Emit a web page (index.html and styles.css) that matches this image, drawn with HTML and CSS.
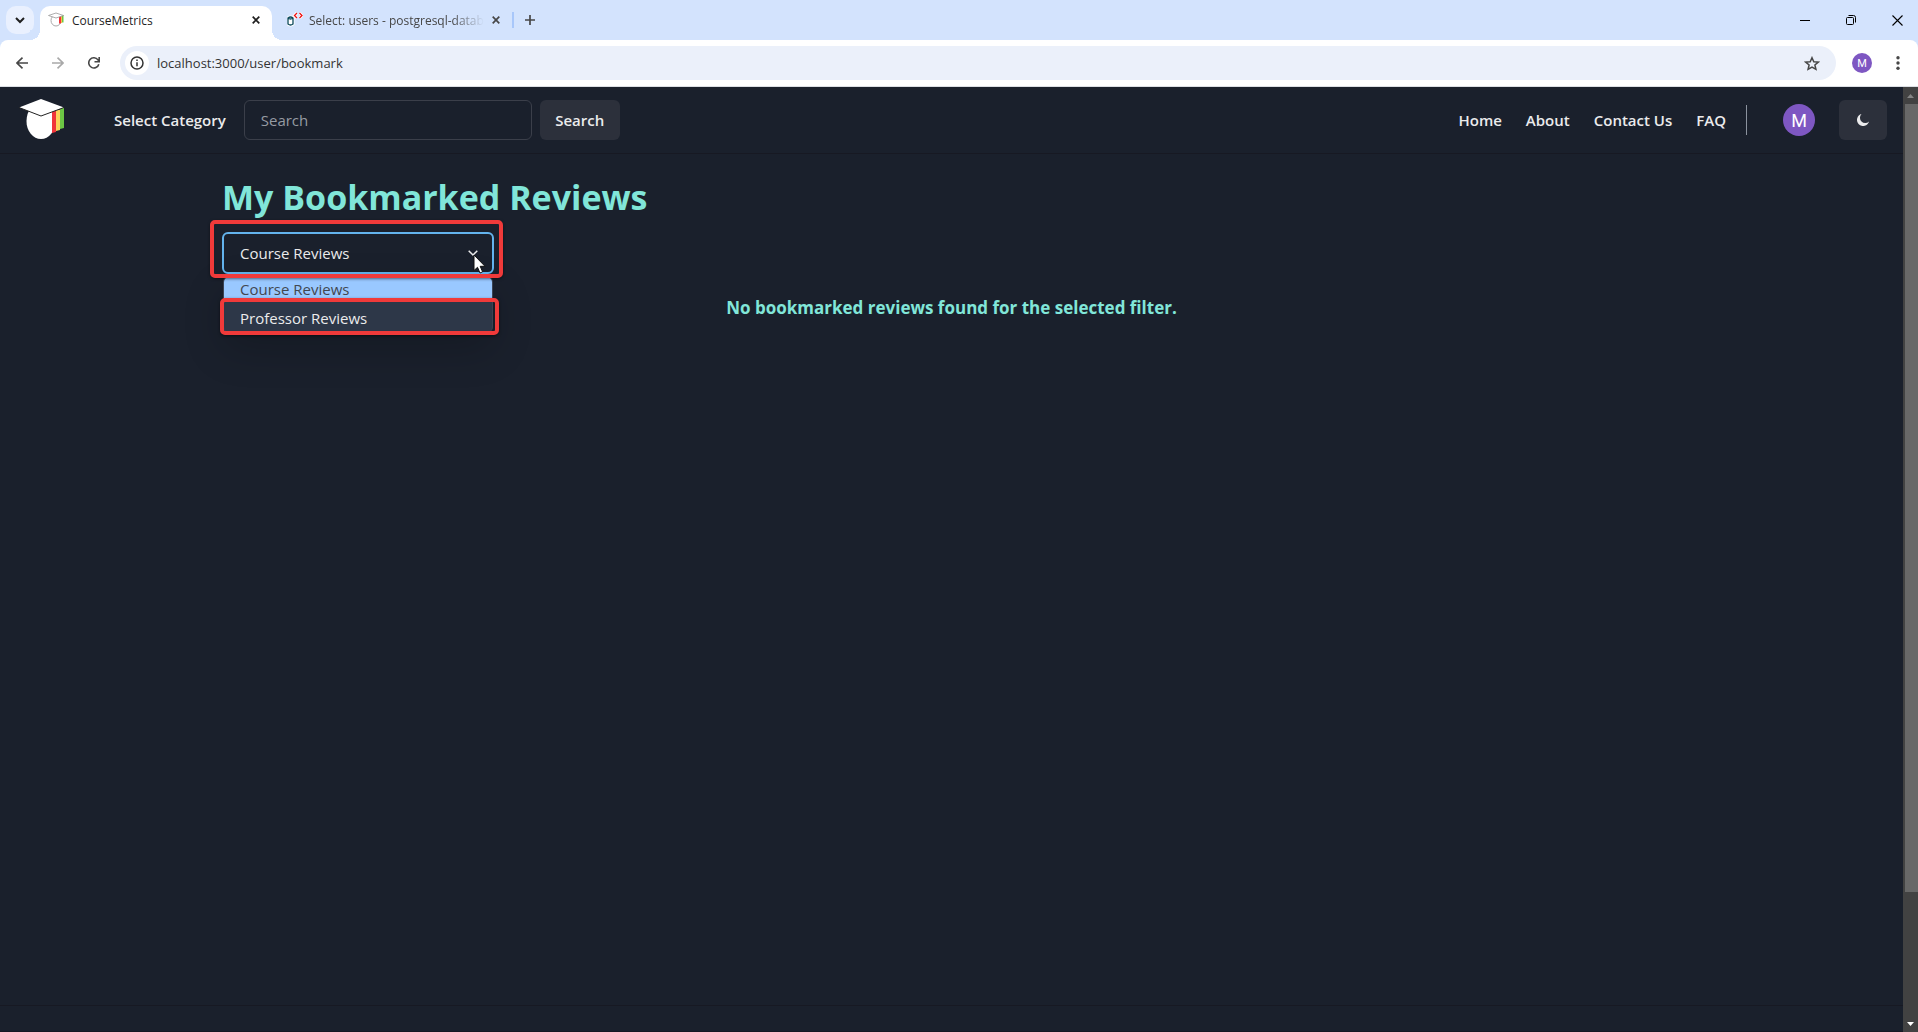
FILE: index.html
```html
<!DOCTYPE html>
<html lang="en">
<head>
<meta charset="utf-8">
<meta name="viewport" content="width=device-width, initial-scale=1">
<title>CourseMetrics</title>
<link rel="stylesheet" href="styles.css">
</head>
<body>
<svg class="defs" aria-hidden="true">
  <symbol id="cap" viewBox="0 0 46 42">
    <ellipse cx="22" cy="23" rx="14.5" ry="18" fill="#fff"/>
    <path d="M33 13h4v21l-4 1z" fill="#f0343a"/>
    <path d="M37 12h4v20l-4 1z" fill="#fbd25a"/>
    <path d="M41 10h4v20l-4 1z" fill="#6cc644"/>
    <path d="M0 9.500 22 1l23 8.500L22 18z" fill="#fff"/>
    <path d="M0 9.500 22 18l23-8.500" fill="none" stroke="#222" stroke-width="1"/>
  </symbol>
</svg>

<div class="browser">
  <div class="tabstrip">
    <button class="tab-search" aria-label="Search tabs"><svg width="10" height="7" viewBox="0 0 10 7"><path d="M1 1l4 4 4-4" fill="none" stroke="#1f1f1f" stroke-width="2"/></svg></button>
    <div class="tab tab-active">
      <svg class="favicon" viewBox="0 0 16 16"><ellipse cx="8" cy="8.500" rx="5" ry="5.500" fill="#fff" stroke="#aaa"/><path d="M11 4h2v7.500h-2z" fill="#f0343a"/><path d="M13 4h1v7h-1z" fill="#fbc04a"/><path d="M14 3h1.500v7.500H14z" fill="#6cc644"/><path d="M.5 3.500 8 1l7.500 2.500L8 6z" fill="#fff" stroke="#999" stroke-width=".8"/></svg>
      <span class="tab-title">CourseMetrics</span>
      <button class="tab-close" aria-label="Close tab"><svg width="8" height="8" viewBox="0 0 8 8"><path d="M.7.7l6.600 6.600M7.300.7L.7 7.300" stroke="#1f1f1f" stroke-width="1.700"/></svg></button>
    </div>
    <div class="tab tab-idle">
      <svg class="favicon" viewBox="0 0 16 16"><path d="M1 6q2.500-2 5 0v6q-2.500 2-5 0z" fill="#fff" stroke="#fff" stroke-width="3"/><path d="M1 6q2.500-2 5 0v6q-2.500 2-5 0zM1 6q2.500 2 5 0" fill="#fff" stroke="#0c4a5c" stroke-width="1.300"/><path d="M10 1L7.500 3.500 10 6M12.500 1L15 3.500 12.500 6" fill="none" stroke="#fff" stroke-width="3"/><path d="M10 1L7.500 3.500 10 6M12.500 1L15 3.500 12.500 6" fill="none" stroke="#e11" stroke-width="1.300"/></svg>
      <span class="tab-title tab-fade">Select: users - postgresql-datab</span>
      <button class="tab-close" aria-label="Close tab"><svg width="8" height="8" viewBox="0 0 8 8"><path d="M.7.7l6.600 6.600M7.300.7L.7 7.300" stroke="#474747" stroke-width="1.700"/></svg></button>
    </div>
    <button class="new-tab" aria-label="New tab"><svg width="10" height="10" viewBox="0 0 10 10"><path d="M5 0v10M0 5h10" stroke="#474747" stroke-width="1.700"/></svg></button>
    <div class="window-controls">
      <button aria-label="Minimize"><svg width="10" height="10" viewBox="0 0 10 10"><path d="M0 5.500h10" stroke="#000"/></svg></button>
      <button aria-label="Restore"><svg width="10" height="10" viewBox="0 0 10 10" fill="none" stroke="#000"><rect x=".5" y="2.500" width="7" height="7" rx="1"/><path d="M2.500.5h5q2 0 2 2v5"/></svg></button>
      <button aria-label="Close window"><svg width="11" height="11" viewBox="0 0 11 11"><path d="M.5.5l10 10M10.500.5l-10 10" stroke="#000" stroke-width="1.100"/></svg></button>
    </div>
  </div>

  <div class="toolbar">
    <div class="nav-buttons">
      <button aria-label="Back"><svg width="12" height="12" viewBox="0 0 12 12"><path d="M12 6H1M6.500.6L1 6l5.500 5.400" fill="none" stroke="#474747" stroke-width="1.600"/></svg></button>
      <button aria-label="Forward"><svg width="12" height="12" viewBox="0 0 12 12"><path d="M0 6h11M5.500.6L11 6l-5.500 5.400" fill="none" stroke="#a9a9a9" stroke-width="1.600"/></svg></button>
      <button aria-label="Reload"><svg width="12" height="12" viewBox="0 0 12 12"><path d="M10.800 7.200A5.100 5.100 0 1 1 10 2.900L11 4.500M11.200 0v4.700H6.500" fill="none" stroke="#474747" stroke-width="1.600"/></svg></button>
    </div>
    <div class="omnibox">
      <button class="site-info" aria-label="Site information"><svg width="14" height="14" viewBox="0 0 14 14"><circle cx="7" cy="7" r="6" fill="none" stroke="#333" stroke-width="1.500"/><path d="M7 6.200v4M7 3.500v1.500" stroke="#333" stroke-width="1.500"/></svg></button>
      <input class="url" type="text" aria-label="Address" value="localhost:3000/user/bookmark">
      <button class="star" aria-label="Bookmark this tab"><svg width="16" height="15" viewBox="0 0 16 15"><path d="M8 1.700l1.800 4 4.500.4-3.400 2.900 1 4.300L8 11l-3.900 2.300 1-4.300L1.700 6.100l4.500-.4z" fill="none" stroke="#474747" stroke-width="1.500"/></svg></button>
    </div>
    <button class="avatar avatar-small" aria-label="Profile">M</button>
    <button class="more" aria-label="Browser menu"><svg width="4" height="14" viewBox="0 0 4 14" fill="#474747"><circle cx="2" cy="1.700" r="1.700"/><circle cx="2" cy="7" r="1.700"/><circle cx="2" cy="12.300" r="1.700"/></svg></button>
  </div>

  <div class="viewport">
    <div class="page">
      <header class="site-header">
        <a class="logo" href="#" aria-label="CourseMetrics home"><svg width="46" height="42"><use href="#cap"/></svg></a>
        <button class="category">Select Category</button>
        <form class="search">
          <input type="search" placeholder="Search" aria-label="Search">
          <button type="button">Search</button>
        </form>
        <nav class="links">
          <a href="#">Home</a><a href="#">About</a><a href="#">Contact Us</a><a href="#">FAQ</a>
        </nav>
        <span class="divider"></span>
        <button class="avatar" aria-label="Account">M</button>
        <button class="theme" aria-label="Toggle colour mode"><svg width="14" height="14" viewBox="0 0 14 14"><path d="M5.500 1A6.100 6.100 0 1 0 13 8.500 4.300 4.300 0 0 1 5.500 1z" fill="#ebebec"/></svg></button>
      </header>

      <main class="content">
        <h1>My Bookmarked Reviews</h1>
        <div class="filter">
          <select aria-label="Review type"><option>Course Reviews</option><option>Professor Reviews</option></select>
          <svg class="chevron" width="10" height="6" viewBox="0 0 10 6"><path d="M.7.7L5 5 9.300.7" fill="none" stroke="#ebebec" stroke-width="1.500"/></svg>
          <ul class="options" role="listbox">
            <li class="option-selected" role="option" aria-selected="true">Course Reviews</li>
            <li role="option">Professor Reviews</li>
          </ul>
          <span class="mark mark-select"></span>
          <span class="mark mark-option"></span>
          <svg class="cursor" width="13" height="20" viewBox="0 0 13 20"><path d="M1 1v15.500l3.500-3.200 2.500 5.700 2.600-1.200L7.200 12.300H12z" fill="#fff" stroke="#111"/></svg>
        </div>
        <p class="empty">No bookmarked reviews found for the selected filter.</p>
      </main>

      <footer class="site-footer"></footer>
    </div>
    <div class="scrollbar" aria-hidden="true">
      <svg class="arrow" width="7" height="4" viewBox="0 0 7 4"><path d="M0 4l3.500-4L7 4z" fill="#858585"/></svg>
      <span class="thumb"></span>
      <span class="track"></span>
      <svg class="arrow" width="7" height="4" viewBox="0 0 7 4"><path d="M0 0l3.500 4L7 0z" fill="#fff"/></svg>
    </div>
  </div>
</div>
</body>
</html>
```
FILE: styles.css
```css
* { box-sizing: border-box; }
body {
  margin: 0;
  font-family: "Open Sans", "Noto Sans", sans-serif;
  font-size: 15px;
  color: #ebebec;
  background: #1a202c;
}
button, input, select { font: inherit; color: inherit; }
button {
  display: flex;
  align-items: center;
  justify-content: center;
  padding: 0;
  border: 0;
  background: none;
  flex-shrink: 0;
}
a { color: inherit; text-decoration: none; }
svg { display: block; flex-shrink: 0; }
.defs { position: absolute; width: 0; height: 0; }
.browser { display: flex; flex-direction: column; min-height: 100vh; background: #d3e3fd; }

/* Tab strip */
.tabstrip { display: flex; height: 40px; padding-left: 6px; overflow: hidden; color: #474747; font-size: 12px; }
.tab-search { width: 28px; height: 28px; margin: 6px 6px 0 0; border-radius: 10px; background: #e9f0fe; }
.tab { display: flex; align-items: center; gap: 8px; padding: 0 8px; }
.tab-active {
  position: relative;
  width: 232px;
  height: 34px;
  margin-top: 6px;
  padding-bottom: 6px;
  border-radius: 10px 10px 0 0;
  background: #fff;
  color: #1f1f1f;
}
.tab-active::before, .tab-active::after {
  content: "";
  position: absolute;
  bottom: 0;
  width: 10px;
  height: 10px;
}
.tab-active::before { right: 100%; background: radial-gradient(circle at 0 0, #d3e3fd 10px, #fff 10px); }
.tab-active::after { left: 100%; background: radial-gradient(circle at 100% 0, #d3e3fd 10px, #fff 10px); }
.tab-idle { gap: 6px; width: 240px; padding: 0 10px 0 15px; }
.favicon { width: 16px; height: 16px; }
.tab-title { flex: 1; overflow: hidden; white-space: nowrap; }
.tab-fade { -webkit-mask-image: linear-gradient(to left, transparent, #000 32px); mask-image: linear-gradient(to left, transparent, #000 32px); }
.tab-close { width: 16px; height: 16px; }
.tab-idle .tab-close { width: 12px; }
.new-tab { width: 34px; height: 16px; margin-top: 12px; border-left: 2px solid #a8c7fa; }
.window-controls { display: flex; margin: 0 -2px 0 auto; }
.window-controls button { width: 46px; height: 40px; }

/* Address bar */
.toolbar {
  display: flex;
  align-items: center;
  height: 47px;
  border-bottom: 1px solid #dcdfe4;
  border-radius: 8px 8px 0 0;
  background: #fff;
  color: #333;
}
.nav-buttons { display: flex; padding: 0 8px 0 4px; }
.nav-buttons button { width: 36px; height: 34px; }
.omnibox {
  display: flex;
  flex: 1;
  align-items: center;
  height: 34px;
  padding: 0 16px 0 5px;
  border-radius: 17px;
  background: #ebf0fa;
}
.site-info { width: 24px; height: 24px; border-radius: 50%; background: #fff; }
.url { flex: 1; min-width: 0; padding: 0 8px; border: 0; background: none; font-size: 13px; outline: 0; }
.avatar {
  width: 32px;
  height: 32px;
  border-radius: 50%;
  background: #7e57c2;
  color: #fff;
  font-family: Roboto, sans-serif;
  font-size: 18px;
  font-weight: 400;
}
.avatar-small { width: 20px; height: 20px; margin: 0 16px; font-size: 11px; }
.more { width: 20px; margin-right: 10px; }

/* Page and scrollbar */
.viewport { display: flex; flex: 1; background: #1a202c; }
.page { display: flex; flex: 1; flex-direction: column; min-width: 0; }
.scrollbar { display: flex; flex-direction: column; align-items: center; width: 15px; background: #424242; }
.arrow { margin: 7px 0 6px; }
.thumb { flex: 788; align-self: stretch; margin-left: 2px; background: #686868; }
.track { flex: 123; }

/* Site header */
.site-header {
  display: flex;
  align-items: center;
  min-height: 67px;
  padding: 0 16px 0 19px;
  border-bottom: 1px solid #171923;
  font-weight: 600;
}
.logo { padding-bottom: 2px; }
.category { margin: 0 18px 0 49px; font-weight: 600; }
.search { display: flex; gap: 8px; }
.search input {
  width: 288px;
  height: 40px;
  padding: 0 16px;
  border: 1px solid #3b3f4a;
  border-radius: 6px;
  background: none;
  font-weight: 400;
}
.search input::placeholder { color: #969ba3; }
.search button, .theme { height: 40px; border-radius: 6px; background: #2c303b; font-weight: 600; }
.search button { width: 80px; }
.theme { width: 48px; }
.links { display: flex; gap: 24px; margin-left: auto; }
.divider { width: 1px; height: 30px; margin: 0 36px 0 20px; background: #8b929e; }
.site-header .avatar { margin-right: 24px; }

/* Bookmarks */
.content { flex: 1; width: 100%; max-width: 1491px; margin: 0 auto; padding: 21px 16px; }
h1 { margin: 0; color: #81e6d9; font-size: 34px; line-height: 44px; font-weight: 700; }
.filter { position: relative; width: 272px; margin-top: 13px; }
select {
  display: block;
  width: 100%;
  height: 42px;
  padding: 0 16px;
  border: 2px solid #63b3ed;
  border-radius: 6px;
  background: #1a202c;
  appearance: none;
  outline: 0;
}
.chevron { position: absolute; top: 18px; right: 16px; }
.options {
  position: absolute;
  top: 44px;
  left: 1px;
  right: 1px;
  margin: 0;
  padding: 0;
  border: 1px solid #3b4353;
  border-radius: 6px;
  background: #2d3748;
  list-style: none;
  line-height: 20px;
  overflow: hidden;
  box-shadow: 0 16px 40px rgba(0, 0, 0, .2);
}
.options li { height: 30px; padding: 6px 16px 0; }
.options .option-selected { height: 25px; padding-top: 2px; background: #99c8ff; color: #42474f; }
.mark { position: absolute; border: 4px solid #f03a3a; border-radius: 5px; box-shadow: 0 1px 3px rgba(0, 0, 0, .5); }
.mark-select { inset: -12px -9px auto -12px; height: 58px; }
.mark-option { inset: 66px -5px auto -2px; height: 37px; }
.cursor { position: absolute; top: 22px; right: 8px; }
.empty { margin: 20px 0 0; color: #81e6d9; font-size: 17px; line-height: 27px; font-weight: 700; text-align: center; }
.site-footer { height: 27px; border: solid #171923; border-width: 1px 0; }
```
